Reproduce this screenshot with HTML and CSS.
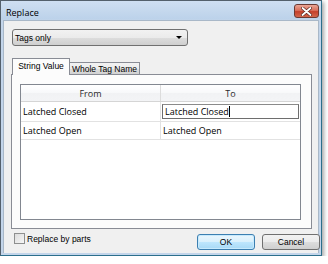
FILE: index.html
```html
<!DOCTYPE html>
<html lang="en">
<head>
    <meta charset="UTF-8">
    <title>Replace</title>
    <link rel="stylesheet" href="styles.css">
</head>
<body>
    <div class="window">
        <div class="titlebar">
            <span class="title">Replace</span>
            <div class="close">
                <svg width="11" height="9" viewBox="0 0 11 9">
                    <path d="M1.5 1 L9.5 8 M9.5 1 L1.5 8" stroke="#5a2620" stroke-width="3.2" stroke-linecap="round"/>
                    <path d="M1.5 1 L9.5 8 M9.5 1 L1.5 8" stroke="#fff" stroke-width="1.8" stroke-linecap="round"/>
                </svg>
            </div>
        </div>
        <div class="client">
            <div class="dropdown">
                <span>Tags only</span>
                <span class="arrow"></span>
            </div>
            <div class="tabs">
                <div class="tab active">String Value</div>
                <div class="tab">Whole Tag Name</div>
            </div>
            <div class="panel">
                <div class="grid">
                    <table>
                        <tr class="head">
                            <th class="col-from">From</th>
                            <th>To</th>
                        </tr>
                        <tr>
                            <td>Latched Closed</td>
                            <td class="editing"><div class="editbox">Latched Closed<span class="caret"></span></div></td>
                        </tr>
                        <tr>
                            <td>Latched Open</td>
                            <td>Latched Open</td>
                        </tr>
                    </table>
                </div>
            </div>
            <div class="footer">
                <label class="check"><span class="box"></span>Replace by parts</label>
                <div class="buttons">
                    <button class="btn default">OK</button>
                    <button class="btn">Cancel</button>
                </div>
            </div>
        </div>
    </div>
</body>
</html>
```

FILE: styles.css
```css
body {
    margin: 0;
    background-color: #fff;
    font-family: "Liberation Sans", Arial, sans-serif;
    font-size: 8.5px;
    color: #000;
}
.window {
    width: 322px;
    height: 256px;
    box-sizing: border-box;
    display: flex;
    flex-direction: column;
    border: 1px solid #54606c;
    border-right-color: #2c6f8c;
    border-bottom-color: #2c6f8c;
    padding: 0 2px 2px 2px;
    background: linear-gradient(#cfdff2, #bcd2ea 18px, #c3d5ea 19px);
    box-shadow: 2px 2px 4px rgba(0, 0, 0, 0.35);
}
.titlebar {
    height: 19px;
    display: flex;
    align-items: flex-start;
    justify-content: space-between;
}
.title {
    font-family: "Open Sans", sans-serif;
    font-size: 9px;
    margin: 5px 0 0 3px;
}
.close {
    width: 25px;
    height: 14px;
    margin-top: 3px;
    box-sizing: border-box;
    border: 1px solid #6b3a34;
    border-radius: 3px;
    background: linear-gradient(#eaa595, #d9705d 45%, #c4402c 55%, #d2664c);
    display: flex;
    align-items: center;
    justify-content: center;
}
.client {
    flex: 1;
    background-color: #f0f0f0;
    border: 1px solid #a9b8c8;
    border-bottom: none;
    display: flex;
    flex-direction: column;
    padding-left: 7px;
}
.dropdown {
    width: 176px;
    height: 17px;
    margin-top: 8px;
    margin-left: 1px;
    box-sizing: border-box;
    border: 1px solid #707070;
    border-radius: 3px;
    background: linear-gradient(#f2f2f2, #ebebeb 50%, #dddddd 51%, #cfcfcf);
    display: flex;
    align-items: center;
    justify-content: space-between;
    padding: 0 5px 0 2px;
}
.arrow {
    width: 0;
    height: 0;
    border-left: 3px solid transparent;
    border-right: 3px solid transparent;
    border-top: 3px solid #000;
}
.tabs {
    display: flex;
    align-items: flex-end;
    margin-top: 12px;
    margin-left: 1px;
    margin-bottom: -1px;
}
.tab {
    height: 13px;
    box-sizing: border-box;
    border: 1px solid #898c95;
    border-bottom: none;
    background: linear-gradient(#f2f2f2, #ebebeb 50%, #dddddd 51%, #cfcfcf);
    padding: 0;
    line-height: 12px;
    width: 71px;
    text-align: center;
    white-space: nowrap;
}
.tab.active {
    height: 17px;
    width: 58px;
    background: #fcfcfc;
    line-height: 15px;
    position: relative;
    z-index: 1;
    margin-right: -1px;
}
.panel {
    width: 301px;
    height: 155px;
    box-sizing: border-box;
    border: 1px solid #898c95;
    background-color: #fcfcfc;
    padding: 9px 10px 8px 8px;
}
.grid {
    height: 136px;
    box-sizing: border-box;
    border: 1px solid #828790;
    background-color: #fff;
}
table {
    width: 100%;
    border-collapse: collapse;
    font-family: "Open Sans", sans-serif;
    font-size: 9px;
}
th {
    height: 16px;
    padding: 0;
    font-weight: normal;
    color: #2a2a2a;
    background: linear-gradient(#ffffff, #f7f8fa 50%, #f1f2f4 51%, #f3f4f6);
    border-bottom: 1px solid #d5d5d5;
    border-left: 1px solid #dcdcdc;
}
th.col-from {
    width: 139px;
    border-left: none;
}
td {
    height: 17px;
    padding: 0 0 0 2px;
    border-bottom: 1px solid #e2e2e2;
    border-left: 1px solid #e2e2e2;
}
td:first-child {
    border-left: none;
}
td.editing {
    padding: 1px;
}
.editbox {
    height: 15px;
    box-sizing: border-box;
    border: 1px solid #6e6e6e;
    border-top-color: #8a8a8a;
    padding-left: 2px;
    display: flex;
    align-items: center;
}
.caret {
    width: 1px;
    height: 11px;
    background-color: #000;
}
.footer {
    display: flex;
    justify-content: space-between;
    align-items: flex-start;
    margin-top: 3px;
    width: 309px;
}
.check {
    display: flex;
    align-items: center;
    margin-top: 1px;
    margin-left: 3px;
}
.box {
    width: 11px;
    height: 11px;
    box-sizing: border-box;
    border: 1px solid #8e8f8f;
    background: linear-gradient(135deg, #dcdcdc, #f6f6f6);
    margin-right: 2px;
}
.buttons {
    display: flex;
    gap: 7px;
    margin-top: 2px;
}
.btn {
    width: 58px;
    height: 16px;
    padding: 0;
    box-sizing: border-box;
    font-family: "Liberation Sans", Arial, sans-serif;
    font-size: 8.5px;
    color: #000;
    border: 1px solid #707070;
    border-radius: 3px;
    background: linear-gradient(#f2f2f2, #ebebeb 50%, #dddddd 51%, #cfcfcf);
}
.btn.default {
    border-color: #3c7fb1;
    background: linear-gradient(#eaf6fd, #d9f0fc 50%, #bee6fd 51%, #a7d9f5);
    box-shadow: inset 0 0 0 1px #c7eafd;
}
```
